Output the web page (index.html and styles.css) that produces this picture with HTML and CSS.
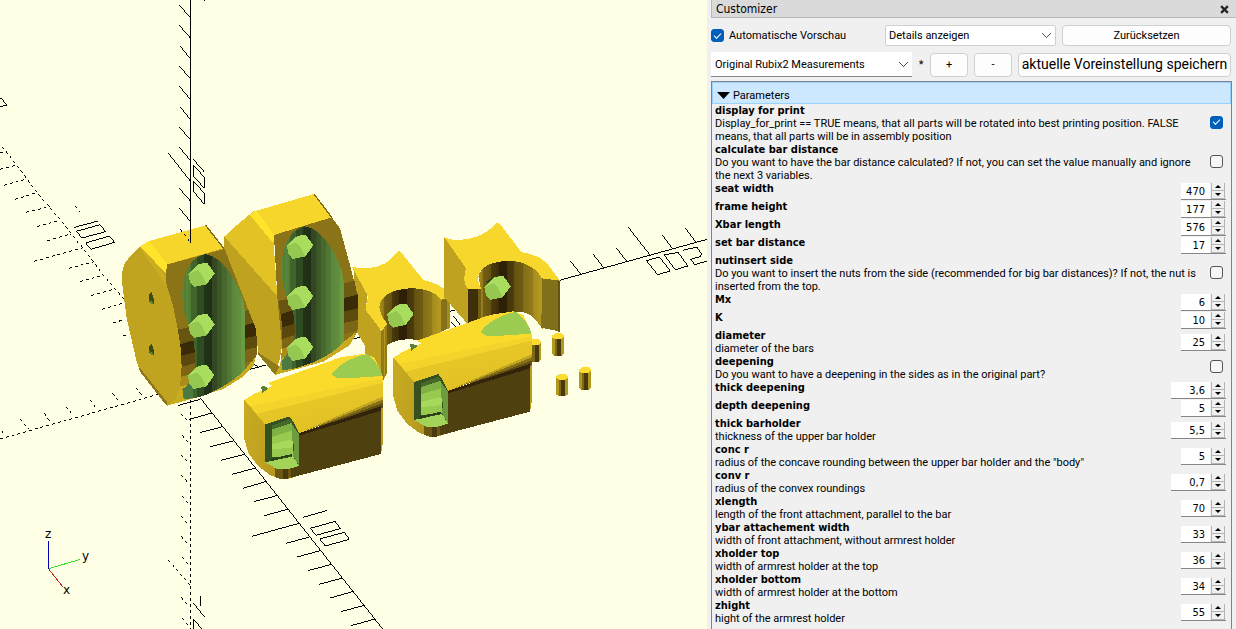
FILE: index.html
```html
<!DOCTYPE html>
<html lang="de">
<head>
<meta charset="utf-8">
<title>Customizer</title>
<link rel="stylesheet" href="styles.css">
</head>
<body>
<div class="app">
<main class="view">
<svg class="scene" viewBox="0 0 707 629" preserveAspectRatio="xMinYMin slice" shape-rendering="crispEdges" role="img" aria-label="3D">
<defs>
<linearGradient id="cav" x1="0" x2="1" y1="0" y2="0">
<stop offset="0" stop-color="#5b8a3a"/><stop offset=".06" stop-color="#4f7a34"/><stop offset=".06" stop-color="#5a8838"/><stop offset=".14" stop-color="#4f7a34"/><stop offset=".14" stop-color="#41642b"/><stop offset=".24" stop-color="#41642b"/><stop offset=".24" stop-color="#2f4b22"/><stop offset=".34" stop-color="#2f4b22"/><stop offset=".34" stop-color="#213317"/><stop offset=".48" stop-color="#1f2f15"/><stop offset=".48" stop-color="#324722"/><stop offset=".55" stop-color="#324722"/><stop offset=".55" stop-color="#3a5427"/><stop offset=".63" stop-color="#3f5b29"/><stop offset=".63" stop-color="#48692e"/><stop offset=".71" stop-color="#48692e"/><stop offset=".71" stop-color="#507534"/><stop offset=".8" stop-color="#547b36"/><stop offset=".8" stop-color="#5c873a"/><stop offset=".93" stop-color="#63903e"/><stop offset=".93" stop-color="#699b42"/><stop offset="1" stop-color="#699b42"/>
</linearGradient>
<linearGradient id="arch" x1="0" x2="1" y1="0" y2="0">
<stop offset="0" stop-color="#b0951f"/><stop offset=".08" stop-color="#8a7418"/><stop offset=".08" stop-color="#735f14"/><stop offset=".2" stop-color="#65520f"/><stop offset=".2" stop-color="#4c3b0c"/><stop offset=".32" stop-color="#3d2e0a"/><stop offset=".32" stop-color="#2e2007"/><stop offset=".44" stop-color="#2e2007"/><stop offset=".44" stop-color="#44340b"/><stop offset=".56" stop-color="#4c3c0d"/><stop offset=".56" stop-color="#645211"/><stop offset=".7" stop-color="#705d14"/><stop offset=".7" stop-color="#826d17"/><stop offset=".85" stop-color="#927b1a"/><stop offset=".85" stop-color="#a58b1d"/><stop offset="1" stop-color="#b89c20"/>
</linearGradient>
<linearGradient id="side" x1="0" x2="1" y1="0" y2=".35">
<stop offset="0" stop-color="#c9ab21"/><stop offset=".5" stop-color="#bfa220"/><stop offset="1" stop-color="#a88e1d"/>
</linearGradient>
<linearGradient id="roof" x1="0" x2=".35" y1="0" y2="1">
<stop offset="0" stop-color="#fcdc2c"/><stop offset=".42" stop-color="#fcdc2c"/><stop offset=".42" stop-color="#f3d229"/><stop offset=".58" stop-color="#f0cf28"/><stop offset=".58" stop-color="#e8c727"/><stop offset="1" stop-color="#e2c126"/>
</linearGradient>
<g id="bolt">
<path fill="#a8dd5e" d="M262 240L270 236L292 234L314 265L290 298L252 306L240 292L235 267Z"/>
<path fill="#94c850" d="M235 267L262 256L276 270L290 298L252 306L240 292Z"/>
</g>
<g id="peg">
<path fill="#7d6817" d="M-18 0H18V52L10 58H-10L-18 52Z"/>
<path fill="#b39820" d="M-18 0H-10V57L-18 52ZM10 0H18V52L10 57Z"/>
<path fill="#483a0e" d="M-2 4H10V58H-2Z"/>
<path fill="#fbdb2d" d="M-18 -2L-8 -9H10L18 -3V1L8 9H-8L-18 3Z"/>
</g>
<g id="holder">
<path fill="url(#side)" d="M160 473L225 470L325 570V700L290 710H268L235 697L200 670L172 632L160 590Z"/>
<path fill="#b99c1f" d="M568 470L576 480V600L570 635H560Z"/>
<path fill="#4e400f" d="M320 575L570 497V635L300 706L292 690Z"/>
<path fill="#6d5813" d="M252 676L300 676V704L290 710H268L252 704Z"/>
<path fill="#4a3a0d" d="M276 680L290 681V710H276Z"/>
<path fill="url(#roof)" d="M160 473L190 455L245 430L230 422L450 345L520 334L550 345L571 390L575 402V482L325 573L295 522L222 546Z"/>
<path fill="#fadb2c" d="M160 473L245 430L232 424L440 348L510 336L422 397L440 407L575 402V412L180 492Z"/>
<path fill="#f4d32a" d="M180 492L575 408V422L195 515Z"/>
<path fill="#c0a320" d="M340 564L575 463V475Z"/>
<path fill="#857018" d="M330 570L575 472V487Z"/>
<path fill="#5f4e12" d="M325 574L575 482V496Z"/>
<path fill="#33230a" d="M325 572L570 492V505L325 580Z"/>
<path fill="#9ccb52" d="M422 397L432 383Q465 350 520 337L530 336L555 362L570 385L573 401L470 408H440Z"/>
<path fill="#5d8038" d="M210 434L217 431L233 438L214 452Z"/>
<path fill="#36501f" d="M222 547L295 522L308 540L324 572V670L290 680L222 660Z"/>
<path fill="#456a2c" d="M243 550L297 530L303 540L243 562Z"/>
<path fill="#97ca4f" d="M243 568L303 552L306 640L243 645Z"/>
<path fill="#80b145" d="M243 562L303 542V565L243 583Z"/>
<path fill="#a6d95c" d="M243 606L306 590V615L243 622Z"/>
<path fill="#6d9b40" d="M302 545L324 575V671L306 640L309 610L303 590Z"/>
<path fill="#a1d458" d="M222 660L306 642L324 671L290 681H260Z"/>
<path fill="#2b3f1a" d="M236 650L303 635V640L243 656Z"/>
</g>
</defs>

<g class="axes" transform="scale(.33333)">
<path d="M571 0V728M611 0L614 4M538 15L571 53M538 76L571 114M541 139L571 176M538 198L571 236M538 259L571 298M541 321L571 359M538 381L571 419M538 442L571 481M505 460L571 543M538 565L571 603M538 625L571 664M580 478L614 517M580 495L613 532V565L580 528ZM580 543L613 580V613L580 574ZM223 682L295 663M229 694L300 674L317 695L246 714ZM257 729L328 708L344 727L273 748ZM0 295H5L20 316L0 320"/>
<path class="dashed" d="M7 440L50 495L110 577L180 658L250 745L310 825L372 898M0 457H10M0 508L50 495M12 556L77 538M45 598L110 578M78 637L150 620M111 680L180 660M142 722L212 702M103 784L245 744M207 805L278 786M240 845L310 826M274 886L340 868M306 928L368 910M226 618L240 637M340 968L368 960"/>
</g>
<g class="axes" transform="translate(0 320) scale(.33333)">
<path class="dashed" d="M0 357L475 223M5 333L12 342M60 297L85 326M133 280L152 308M198 260L222 288M271 240L292 270M337 220L360 248M408 203L430 230M571 240V927M543 282L566 305M546 346L566 368M543 405L566 428M543 465L566 490M546 528L566 552M543 589L566 613M543 649L566 674M546 711L566 735M505 720L571 797M543 832L566 857M546 894L566 918M338 8L365 2M370 48H378"/>
<path d="M601 828V857M580 849L614 892M580 927V897L606 927"/>
</g>
<g class="axes" transform="translate(150 400) scale(.33333)">
<path d="M150 -7L698 687M85 16L150 -2M118 58L186 39M150 98L218 80M180 140L252 122M213 181L285 163M246 223L317 204M279 265L350 244M312 305L380 287M343 347L413 328M306 409L447 370M408 430L478 411M441 471L511 452M474 512L545 493M507 553L578 534M540 594L608 575M573 635L643 616M603 677L675 657M460 352L530 332M481 385L555 364L571 386L498 406ZM509 417L583 397L598 418L526 438Z"/>
</g>
<g class="axes" transform="translate(340 200) scale(.33333)">
<path d="M655 242L1101 118M691 183L723 223M760 163L792 205M829 144L861 185M865 82L930 165M967 105L998 147M1036 84L1067 126M919 182L958 171L991 213L953 224ZM973 165L1014 157L1044 198L1006 209ZM1029 151L1070 141L1085 162L1080 170L1052 178L1064 194L1101 183M330 334L358 326M332 365L350 383M340 347L363 378M35 418L62 411M-270 508L-222 495M-262 487L-242 506"/>
</g>

<g transform="translate(340 200) scale(.33333)">
<path fill="#bfa320" d="M40 200L82 285L78 325L123 392V527L76 470V440L50 395Z"/>
<path fill="#917a1a" d="M123 392L142 368V515L131 540L123 527Z"/>
<path fill="#b2971f" d="M131 384H136V528L131 540Z"/>
<path fill="url(#arch)" d="M118 320Q125 268 210 263Q280 265 305 298V395L245 424L210 417Q160 420 142 435V372Q120 345 118 320Z"/>
<path fill="#85701a" d="M303 298L330 280V384L303 395Z"/><path fill="#a68c1d" d="M322 286H330V384L322 387Z"/>
<path fill="#f8d72c" d="M36 200L60 205Q120 206 150 180L172 155L178 152L192 168L250 240Q300 250 330 282V290L303 300Q280 265 210 265Q125 270 118 320Q120 345 142 372L125 393L92 350Q76 335 78 320Q85 290 82 285Z"/>
<g transform="translate(-93 77)"><use href="#bolt"/></g>

<path fill="#bfa320" d="M313 112L378 200L373 240L385 268V375L313 292Z"/>
<path fill="url(#arch)" d="M415 230Q425 185 510 180Q580 190 608 230V387L595 370Q570 330 520 336L423 362V266Z"/>
<path fill="#3e2f0b" d="M385 266H422V357L385 372Z"/><path fill="#735f14" d="M415 266H422V357L415 360Z"/>
<path fill="#81701a" d="M606 230L660 242V395L604 383Z"/><path fill="#655413" d="M654 242H660V395H654Z"/>
<path fill="#f8d72c" d="M313 112L330 118Q370 124 410 110Q440 100 468 70H478L545 157Q600 165 625 195L660 242L606 235Q580 188 510 182Q430 185 415 225Q412 250 425 268L385 268Q365 245 378 205Z"/>
<path fill="#2c3d18" d="M437 245L460 232L490 228L450 252Z"/>
<g transform="translate(198 -6)"><use href="#bolt"/></g>
<g transform="translate(586 427)"><use href="#peg"/></g>
<g transform="translate(654 409)"><use href="#peg"/></g>
<g transform="translate(735 511)"><use href="#peg"/></g>
<g transform="translate(666 531)"><use href="#peg"/></g>
</g>

<g transform="translate(110 185) scale(.33333)">
<path fill="#c0a420" d="M118 168L287 121L343 192L375 255L430 372L440 440V505L430 545L400 575L340 612L250 640L172 662L160 650L90 560L80 530L50 400L37 300V260L45 232L90 183Z"/>
<path fill="#8c7618" d="M86 545L172 652V662L160 650L90 560Z"/>
<path fill="#cbad22" d="M45 232L90 183L110 200L168 275V300L88 187Z"/>
<path fill="#8a7417" d="M167 240L343 192L375 255L430 372L440 440V500L405 560L330 600L250 635L210 605L215 550L213 490L203 430L190 365L167 290Z"/>
<path fill="#c9ab21" d="M212 600L250 580L260 630L405 555L438 508L430 545L400 575L340 612L250 640L172 662L198 640Z"/>
<path fill="#f7d62c" d="M118 168L287 121L340 190L172 238Z"/>
<path fill="#ffe42b" d="M90 183L118 168L172 238L167 265Z"/>
<path fill="#665410" d="M203 433L250 425L260 470L211 478Z"/><path fill="#392a08" d="M211 478L262 462V503L213 512Z"/><path fill="#5b480e" d="M213 512L262 500V535L215 546Z"/><path fill="#7d6716" d="M215 546L262 532V565L212 576Z"/><path fill="#a88d1d" d="M212 576L255 563L235 598L211 604Z"/>
<path fill="#6d5a13" d="M404 378L432 370L438 412L404 420Z"/><path fill="#392a08" d="M404 420L438 412V453L404 460Z"/><path fill="#5d4a0f" d="M404 460L440 452V487L404 495Z"/><path fill="#7d6716" d="M404 495L440 487V510L425 530L404 534Z"/>
<path fill="url(#cav)" d="M283 208C330 205 400 300 405 380V555C370 590 300 632 250 640L220 640Q212 620 235 595L255 560Q258 470 240 425Q215 380 217 320Q222 225 283 208Z"/>
<path fill="#4b7a42" d="M217 612L240 598L250 612V640L222 642Z"/>
<path class="edge" d="M287 121L343 192"/>
<g><use href="#bolt"/></g><g transform="translate(0 153)"><use href="#bolt"/></g><g transform="translate(-1 306)"><use href="#bolt"/></g>
<path fill="#3c4c16" d="M117 328L125 321L131 340V357L117 349Z"/><path fill="#5b8a3e" d="M118 346L127 349L131 357L122 356Z"/>
<path fill="#3c4c16" d="M117 483L125 476L131 495V510L117 502Z"/><path fill="#5b8a3e" d="M118 499L127 502L131 510L122 509Z"/>

<path fill="#bfa320" d="M343 155L510 340L518 470L510 520L495 570L445 505L437 430L343 190Z"/>
<path fill="#917a1a" d="M442 500L508 545L495 570L445 508Z"/>
<path fill="#e3c226" d="M343 155L375 125L432 78L495 150L490 160L503 350L343 186Z"/>
<path fill="#bfa320" d="M343 155L503 335L510 365L343 190Z"/>
<path fill="#8a7417" d="M492 150L665 97L690 130L720 240L742 330V440L720 480L640 530L520 556L515 470L503 350Z"/>
<path fill="#c9ab21" d="M508 545L520 500L540 550L702 470L740 440L720 480L640 530L495 570Z"/>
<path fill="#f7d62c" d="M440 77L612 27L665 97L492 150Z"/>
<path fill="#ffe42b" d="M432 80L440 77L492 150L490 175L420 90Z"/>
<path fill="#665410" d="M505 348L540 340L552 378L512 388Z"/><path fill="#392a08" d="M512 388L555 374V418L517 427Z"/><path fill="#5b480e" d="M517 427L556 416V452L517 462Z"/><path fill="#7d6716" d="M517 462L556 450V478L516 492Z"/><path fill="#a88d1d" d="M516 492L552 480L530 512L512 522Z"/>
<path fill="#6d5a13" d="M700 295L733 287L742 330L700 340Z"/><path fill="#392a08" d="M700 340L744 328V370L700 380Z"/><path fill="#5d4a0f" d="M700 380L744 370V405L700 414Z"/><path fill="#7d6716" d="M700 414L744 405V436L700 448Z"/>
<path fill="url(#cav)" d="M582 124C630 125 695 210 702 300V470C670 510 590 548 520 556Q505 535 530 508L552 475Q560 400 540 355Q510 300 515 230Q525 140 582 124Z"/>
<path fill="#4b7a42" d="M514 528L535 512L545 525V551L518 557Z"/>
<path class="edge" d="M612 27L665 97"/>
<g transform="translate(296 -84)"><use href="#bolt"/></g><g transform="translate(296 69)"><use href="#bolt"/></g><g transform="translate(296 222)"><use href="#bolt"/></g>
</g>
<g class="axes" transform="scale(.33333)"><path d="M571 670V728"/><path class="dashed" d="M541 688L571 727"/></g>
<g transform="translate(340 200) scale(.33333)">
<g transform="translate(-447 127)"><use href="#holder"/></g>
<use href="#holder"/>
</g>
<g class="gizmo">
<path stroke="#0000b4" d="M48.500 541V569"/><path stroke="#2fe02f" d="M49 568.500L80 559.500"/><path stroke="#d02020" d="M49 569.500L63 587"/>
<text x="45" y="538">z</text><text x="82" y="560">y</text><text x="63" y="594">x</text>
</g>
</svg>
</main>

<aside class="dock">
<header class="dock-title"><span>Customizer</span><button class="close" aria-label="Schließen"><svg viewBox="0 0 8 8"><path d="M1 1L7 7M7 1L1 7"/></svg></button></header>
<div class="bar">
<label class="auto"><input class="tick" type="checkbox" checked>Automatische Vorschau</label>
<select class="combo details" aria-label="Details"><option>Details anzeigen</option></select>
<button class="btn reset">Zurücksetzen</button>
</div>
<div class="bar presets">
<select class="combo flat" aria-label="Voreinstellung"><option>Original Rubix2 Measurements</option></select>
<span class="star">*</span>
<button class="btn small">+</button>
<button class="btn small">-</button>
<button class="btn save">aktuelle Voreinstellung speichern</button>
</div>
<section class="panel">
<button class="group"><svg viewBox="0 0 13 7"><path d="M0 0H13L6.500 7Z"/></svg>Parameters</button>
<div class="rows">
<div class="row"><label for="p1"><b>display for print</b><span>Display_for_print == TRUE means, that all parts will be rotated into best printing position. FALSE means, that all parts will be in assembly position</span></label><input class="tick" id="p1" type="checkbox" checked></div>
<div class="row"><label for="p2"><b>calculate bar distance</b><span>Do you want to have the bar distance calculated? If not, you can set the value manually and ignore the next 3 variables.</span></label><input class="tick" id="p2" type="checkbox"></div>
<div class="row"><label for="p3"><b>seat width</b></label><div class="spin"><input id="p3" value="470"><button aria-label="mehr"></button><button aria-label="weniger"></button></div></div>
<div class="row"><label for="p4"><b>frame height</b></label><div class="spin"><input id="p4" value="177"><button aria-label="mehr"></button><button aria-label="weniger"></button></div></div>
<div class="row"><label for="p5"><b>Xbar length</b></label><div class="spin"><input id="p5" value="576"><button aria-label="mehr"></button><button aria-label="weniger"></button></div></div>
<div class="row"><label for="p6"><b>set bar distance</b></label><div class="spin"><input id="p6" value="17"><button aria-label="mehr"></button><button aria-label="weniger"></button></div></div>
<div class="row"><label for="p7"><b>nutinsert side</b><span>Do you want to insert the nuts from the side (recommended for big bar distances)? If not, the nut is inserted from the top.</span></label><input class="tick" id="p7" type="checkbox"></div>
<div class="row"><label for="p8"><b>Mx</b></label><div class="spin"><input id="p8" value="6"><button aria-label="mehr"></button><button aria-label="weniger"></button></div></div>
<div class="row"><label for="p9"><b>K</b></label><div class="spin"><input id="p9" value="10"><button aria-label="mehr"></button><button aria-label="weniger"></button></div></div>
<div class="row"><label for="p10"><b>diameter</b><span>diameter of the bars</span></label><div class="spin"><input id="p10" value="25"><button aria-label="mehr"></button><button aria-label="weniger"></button></div></div>
<div class="row"><label for="p11"><b>deepening</b><span>Do you want to have a deepening in the sides as in the original part?</span></label><input class="tick" id="p11" type="checkbox"></div>
<div class="row"><label for="p12"><b>thick deepening</b></label><div class="spin wide"><input id="p12" value="3,6"><button aria-label="mehr"></button><button aria-label="weniger"></button></div></div>
<div class="row"><label for="p13"><b>depth deepening</b></label><div class="spin"><input id="p13" value="5"><button aria-label="mehr"></button><button aria-label="weniger"></button></div></div>
<div class="row"><label for="p14"><b>thick barholder</b><span>thickness of the upper bar holder</span></label><div class="spin wide"><input id="p14" value="5,5"><button aria-label="mehr"></button><button aria-label="weniger"></button></div></div>
<div class="row"><label for="p15"><b>conc r</b><span>radius of the concave rounding between the upper bar holder and the "body"</span></label><div class="spin"><input id="p15" value="5"><button aria-label="mehr"></button><button aria-label="weniger"></button></div></div>
<div class="row"><label for="p16"><b>conv r</b><span>radius of the convex roundings</span></label><div class="spin wide"><input id="p16" value="0,7"><button aria-label="mehr"></button><button aria-label="weniger"></button></div></div>
<div class="row"><label for="p17"><b>xlength</b><span>length of the front attachment, parallel to the bar</span></label><div class="spin"><input id="p17" value="70"><button aria-label="mehr"></button><button aria-label="weniger"></button></div></div>
<div class="row"><label for="p18"><b>ybar attachement width</b><span>width of front attachment, without armrest holder</span></label><div class="spin"><input id="p18" value="33"><button aria-label="mehr"></button><button aria-label="weniger"></button></div></div>
<div class="row"><label for="p19"><b>xholder top</b><span>width of armrest holder at the top</span></label><div class="spin"><input id="p19" value="36"><button aria-label="mehr"></button><button aria-label="weniger"></button></div></div>
<div class="row"><label for="p20"><b>xholder bottom</b><span>width of armrest holder at the bottom</span></label><div class="spin"><input id="p20" value="34"><button aria-label="mehr"></button><button aria-label="weniger"></button></div></div>
<div class="row"><label for="p21"><b>zhight</b><span>hight of the armrest holder</span></label><div class="spin"><input id="p21" value="55"><button aria-label="mehr"></button><button aria-label="weniger"></button></div></div>
</div>
</section>
</aside>
</div>
</body>
</html>
```

FILE: styles.css
```css
* { box-sizing: border-box; }
body { margin: 0; background: #f0f0f0; color: #000; font: 11px/13px Roboto, "DejaVu Sans", sans-serif; }
button, input, select { font: inherit; color: inherit; margin: 0; }
.app { display: grid; grid-template-columns: 57.2% minmax(0, 1fr); height: 100vh; overflow: hidden; }
.view { background: #ffffe5; overflow: hidden; }
.scene { display: block; width: 100%; height: 100%; }
.axes path { fill: none; stroke: #000; stroke-width: 3; }
.axes .dashed { stroke-dasharray: 9 9; }
.edge { fill: none; stroke: #7d6816; stroke-width: 4; }
.gizmo path { fill: none; stroke-width: 1; }
.gizmo text { font: 12px "DejaVu Sans", sans-serif; }

.dock { display: flex; flex-direction: column; min-height: 0; padding-left: 4px; }
.dock-title { display: flex; justify-content: space-between; align-items: center; height: 18px; padding: 2px 7px 0 4px; background: #dadada; border: 1px solid #b9b9b9; border-top: 0; border-right: 0; font-family: "DejaVu Sans Condensed", "DejaVu Sans", sans-serif; font-size: 12px; }
.close { width: 9px; height: 9px; padding: 0; border: 0; background: none; display: flex; }
.close svg { width: 9px; height: 9px; fill: none; stroke: #222; stroke-width: 2; }
.bar { display: flex; align-items: center; gap: 6px; padding: 7px 5px 0 0; }
.auto { flex: 1; display: flex; align-items: center; gap: 5px; white-space: nowrap; }
.tick { appearance: none; flex: none; width: 13px; height: 13px; border: 1px solid #555; border-radius: 3px; background: #f6f6f6; }
.tick:checked { border-color: #005fb8; background: #005fb8; display: grid; place-items: center; }
.tick:checked::after { content: ""; width: 6px; height: 3px; border: solid #fff; border-width: 0 0 1px 1px; transform: translateY(-1px) rotate(-45deg); }
.combo { appearance: none; height: 21px; padding: 0 20px 0 3px; border: 1px solid #d0d0d0; background: #fff; border-radius: 2px;
  background-image: linear-gradient(45deg, transparent 46%, #555 46%, #555 58%, transparent 58%), linear-gradient(-45deg, transparent 46%, #555 46%, #555 58%, transparent 58%);
  background-size: 5px 5px; background-repeat: no-repeat; background-position: right 8px center, right 4px center; }
.details { width: 171px; }
.flat { flex: 1; min-width: 0; height: 25px; border: 0; border-bottom: 1px solid #868686; border-radius: 0; padding-left: 4px; }
.star { width: 6px; text-align: center; }
.btn { height: 21px; padding: 0; border: 1px solid #d0d0d0; border-radius: 4px; background: #fdfdfd; white-space: nowrap; }
.reset { width: 169px; }
.presets { padding-top: 6px; }
.presets .btn { height: 24px; }
.small { width: 38px; }
.presets .save { width: 213px; font-size: 14px; }
.panel { flex: 1; min-height: 0; overflow: hidden; margin: 4px 4px 0 0; border: 1px solid #7f828c; border-bottom: 0; }
.group { display: flex; align-items: center; gap: 3px; width: 100%; height: 22px; padding: 4px 4px 0; border: 1px solid #99d1ff; background: #cce8ff; text-align: left; }
.group svg { width: 13px; height: 7px; }
.rows { padding: 0 5px 0 3px; }
.row { display: flex; justify-content: space-between; align-items: center; min-height: 18px; }
.row label { flex: 1; align-self: flex-start; padding-right: 10px; }
.row b, .row span { display: block; }
.row b { font-family: "DejaVu Sans Condensed", "DejaVu Sans", sans-serif; font-stretch: condensed; }
.row .tick { margin: 0 3px 3px 0; }
.spin { flex: none; display: grid; grid-template-columns: 1fr 15px; grid-template-rows: 8px 8px; width: 45px; padding-right: 1px; border-bottom: 1px solid #868686; }
.wide { width: 55px; }
.spin input { grid-row: 1 / 3; min-width: 0; width: 100%; padding: 1px 5px 0 0; border: 0; background: #fff; text-align: right; font-family: "DejaVu Sans Condensed", "DejaVu Sans", sans-serif; }
.spin button { padding: 0; border: 1px solid #b4b4b4; border-top: 0; background: #f0f0f0; display: grid; place-items: center; margin-left: 1px; }
.spin button::before { content: ""; border: solid transparent; border-width: 0 3px 3px; border-bottom-color: #000; }
.spin button:last-child { grid-column: 2; }
.spin button:last-child::before { border-width: 3px 3px 0; border-top-color: #000; }
```
